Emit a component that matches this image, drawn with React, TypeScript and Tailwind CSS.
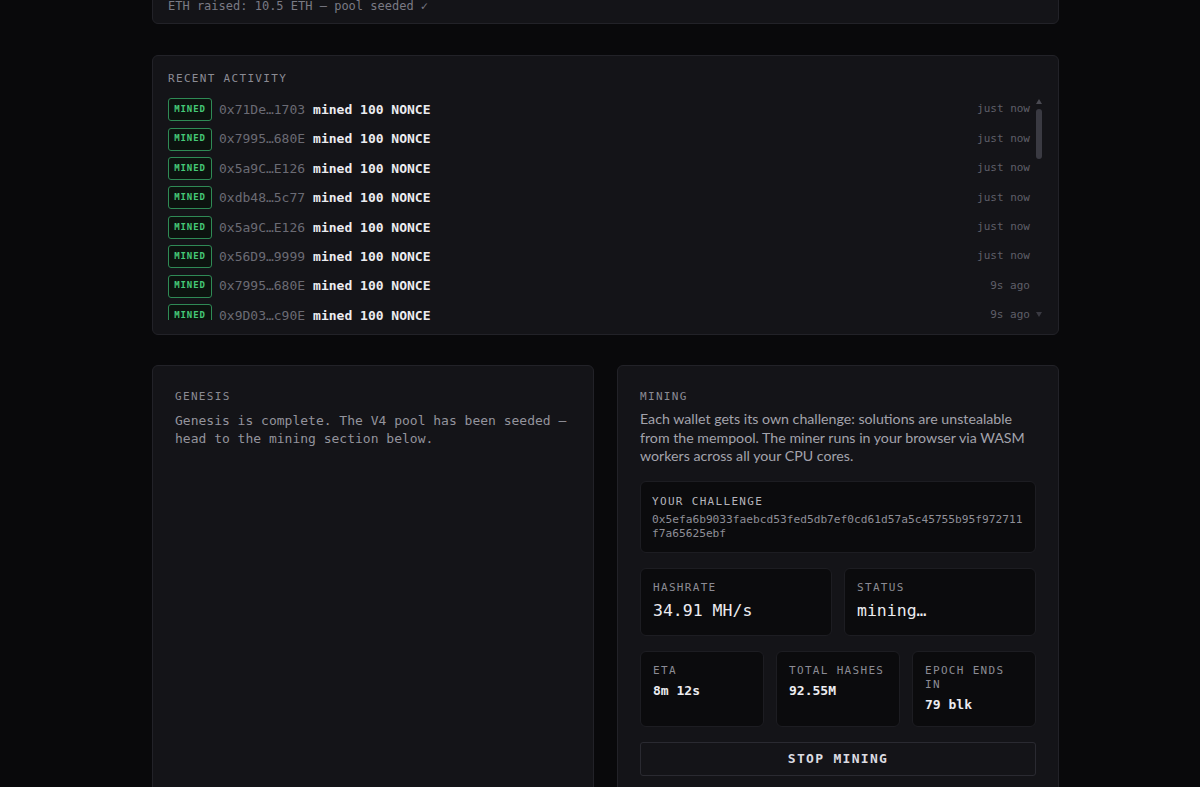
const mono = "font-['DejaVu_Sans_Mono','Liberation_Mono',monospace]"

const activity: [string, string][] = [
  ['0x71De…1703', 'just now'],
  ['0x7995…680E', 'just now'],
  ['0x5a9C…E126', 'just now'],
  ['0xdb48…5c77', 'just now'],
  ['0x5a9C…E126', 'just now'],
  ['0x56D9…9999', 'just now'],
  ['0x7995…680E', '9s ago'],
  ['0x9D03…c90E', '9s ago'],
  ['0x71De…1703', '9s ago'],
  ['0xdb48…5c77', '21s ago'],
  ['0x56D9…9999', '21s ago'],
  ['0x5a9C…E126', '34s ago'],
  ['0x9D03…c90E', '34s ago'],
  ['0x7995…680E', '47s ago'],
  ['0x71De…1703', '1m ago'],
  ['0xdb48…5c77', '1m ago'],
  ['0x56D9…9999', '1m ago'],
  ['0x5a9C…E126', '1m ago'],
  ['0x9D03…c90E', '2m ago'],
  ['0x7995…680E', '2m ago'],
  ['0x71De…1703', '2m ago'],
  ['0xdb48…5c77', '2m ago'],
  ['0x56D9…9999', '3m ago'],
  ['0x5a9C…E126', '3m ago'],
  ['0x9D03…c90E', '3m ago'],
  ['0x7995…680E', '3m ago'],
  ['0x71De…1703', '4m ago'],
  ['0xdb48…5c77', '4m ago'],
  ['0x56D9…9999', '4m ago'],
  ['0x5a9C…E126', '5m ago'],
  ['0x9D03…c90E', '5m ago'],
  ['0x7995…680E', '5m ago'],
]

function Label({ children, light }: { children: React.ReactNode; light?: boolean }) {
  return (
    <div
      className={`${mono} text-[11px] leading-[14px] tracking-[0.12em] uppercase ${
        light ? 'text-[#b4b4bc]' : 'text-[#8b8b94]'
      }`}
    >
      {children}
    </div>
  )
}

function Stat({ label, value, big }: { label: string; value: string; big?: boolean }) {
  return (
    <div
      className={`bg-[#0b0b0d] border border-[#1d1d22] rounded-md px-3 pt-[12px] ${big ? 'pb-[13px]' : 'pb-3'}`}
    >
      <Label>{label}</Label>
      <div
        className={
          big
            ? `${mono} mt-[5px] text-[16.5px] leading-[22px] text-[#ececf0]`
            : `${mono} mt-[4px] text-[13px] leading-[18px] font-bold text-[#ececf0]`
        }
      >
        {value}
      </div>
    </div>
  )
}

function Scrollbar() {
  return (
    <div className="w-[10px] flex flex-col items-center pt-[4px] pb-[3px]">
      <svg width="6" height="5" viewBox="0 0 6 5">
        <path d="M3 0 L6 5 L0 5 Z" fill="#4a4a52" />
      </svg>
      <div className="mt-[5px] w-[6px] h-[50px] rounded-full bg-[#3a3a42]" />
      <div className="flex-1" />
      <svg width="6" height="5" viewBox="0 0 6 5">
        <path d="M0 0 L6 0 L3 5 Z" fill="#3a3a42" />
      </svg>
    </div>
  )
}

export default function App() {
  return (
    <div className="h-[787px] overflow-hidden bg-[#09090b]">
      <div className="w-[907px] ml-[152px] -mt-[22px] flex flex-col">
        {/* Genesis result card, scrolled mostly out of view */}
        <div className="bg-[#141418] border border-[#222228] rounded-md pl-[15px] pr-4 pt-[18px] pb-[8px]">
          <div className={`${mono} text-[12px] leading-[18px] text-[#7a7a84]`}>
            ETH raised: 10.5 ETH — pool seeded ✓
          </div>
        </div>

        {/* Recent activity */}
        <div className="mt-[31px] bg-[#141418] border border-[#222228] rounded-md pl-[15px] pr-[14px] pt-4 pb-[14px]">
          <Label>Recent Activity</Label>
          <div className="mt-[9px] h-[225px] flex">
            <div className="flex-1 overflow-hidden pr-[4px]">
              {activity.map(([addr, time], i) => (
                <div key={i} className="h-[29.4px] flex items-center">
                  <span
                    className={`${mono} w-[44px] h-[23px] flex items-center justify-center border border-[#2f8a55] bg-[#0c130f] rounded-[3px] text-[9px] font-bold tracking-[0.1em] text-[#45c977]`}
                  >
                    MINED
                  </span>
                  <span className={`${mono} ml-[7px] text-[13px] text-[#6b6b74]`}>{addr}</span>
                  <span className={`${mono} ml-[8px] text-[13px] font-bold text-[#ececf0]`}>
                    mined 100 NONCE
                  </span>
                  <span className={`${mono} ml-auto text-[11px] text-[#5f5f68]`}>{time}</span>
                </div>
              ))}
            </div>
            <Scrollbar />
          </div>
        </div>

        <div className="mt-[30px] grid grid-cols-2 gap-[23px]">
          {/* Genesis */}
          <div className="bg-[#141418] border border-[#222228] rounded-md px-[22px] pt-6 h-[460px]">
            <Label>Genesis</Label>
            <p className={`${mono} mt-[8px] text-[13px] leading-[18px] text-[#93939c]`}>
              Genesis is complete. The V4 pool has been seeded — head to the mining section below.
            </p>
          </div>

          {/* Mining */}
          <div className="bg-[#141418] border border-[#222228] rounded-md px-[22px] pt-6 pb-6">
            <Label>Mining</Label>
            <p className="mt-[6px] font-['Lato','Open_Sans',sans-serif] text-[14.2px] leading-[18.5px] text-[#a3a3ac]">
              Each wallet gets its own challenge: solutions are unstealable from the mempool. The miner runs
              in your browser via WASM workers across all your CPU cores.
            </p>

            <div className="mt-[15px] bg-[#0b0b0d] border border-[#1d1d22] rounded-md px-[11px] pt-[13px] pb-[11px]">
              <Label light>Your Challenge</Label>
              <div className={`${mono} mt-[4px] text-[11.2px] leading-[14px] text-[#8f8f98] break-all`}>
                0x5efa6b9033faebcd53fed5db7ef0cd61d57a5c45755b95f972711f7a65625ebf
              </div>
            </div>

            <div className="mt-[15px] grid grid-cols-2 gap-3">
              <Stat label="Hashrate" value="34.91 MH/s" big />
              <Stat label="Status" value="mining…" big />
            </div>

            <div className="mt-[15px] grid grid-cols-3 gap-3">
              <Stat label="ETA" value="8m 12s" />
              <Stat label="Total Hashes" value="92.55M" />
              <Stat label="Epoch Ends In" value="79 blk" />
            </div>

            <button
              className={`${mono} mt-[15px] w-full h-[34px] border border-[#2a2a31] rounded-[3px] text-[13px] font-bold tracking-[0.1em] text-[#dcdce2]`}
            >
              STOP MINING
            </button>
          </div>
        </div>
      </div>
    </div>
  )
}
